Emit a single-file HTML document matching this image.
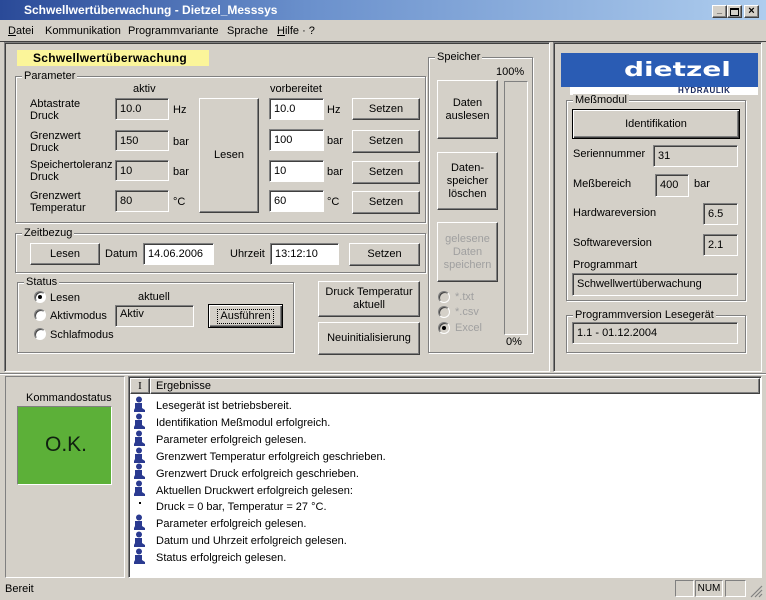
<!DOCTYPE html>
<html><head><meta charset="utf-8"><style>
*{margin:0;padding:0;box-sizing:border-box}
body{width:766px;height:600px;background:#d4d0c8;font:11px "Liberation Sans",sans-serif;color:#000;position:relative;overflow:hidden}
.a{position:absolute;white-space:nowrap}
.btn{position:absolute;background:#d4d0c8;border:1px solid;border-color:#fff #404040 #404040 #fff;box-shadow:inset -1px -1px 0 #808080;display:flex;align-items:center;justify-content:center;text-align:center;line-height:13px}
.fld{position:absolute;background:#d4d0c8;border:1px solid;border-color:#808080 #fff #fff #808080;box-shadow:inset 1px 1px 0 #404040;padding:4px 0 0 4px}
.wf{background:#fff}
.grp{position:absolute;border:1px solid #808080;box-shadow:1px 1px 0 #fff,inset 1px 1px 0 #fff}
.gl{position:absolute;background:#d4d0c8;padding:0 2px;top:-7px;left:6px}
.sunk{position:absolute;border:1px solid;border-color:#808080 #fff #fff #808080}
.rad{position:absolute;width:12px;height:12px;border-radius:50%;background:#fff;border:1px solid;border-color:#808080 #fff #fff #808080;box-shadow:inset 1px 1px 0 #404040}
.rad.on::after{content:"";position:absolute;left:3px;top:3px;width:4px;height:4px;border-radius:50%;background:#000}
.dis{color:#a0a0a0}
</style></head><body>
<div class="a" style="left:0;top:0;width:766px;height:20px;background:linear-gradient(90deg,#2a4a98,#6a90cc 40%,#aecdee)"></div>
<div class="a" style="left:24px;top:3px;color:#fff;font-weight:bold;font-size:12px">Schwellwertüberwachung - Dietzel_Messsys</div>
<div class="btn" style="left:712px;top:5px;width:15px;height:13px;font-size:9px;font-weight:bold;align-items:flex-end">_</div>
<div class="btn" style="left:727px;top:5px;width:15px;height:13px"><div style="width:9px;height:8px;border:1px solid #000;border-top-width:2px"></div></div>
<div class="btn" style="left:744px;top:5px;width:15px;height:13px;font-weight:bold;font-size:11px">×</div>
<div class="a" style="left:8px;top:25px"><u>D</u>atei</div>
<div class="a" style="left:45px;top:25px">Kommunikation</div>
<div class="a" style="left:128px;top:25px">Programmvariante</div>
<div class="a" style="left:227px;top:25px">Sprache</div>
<div class="a" style="left:277px;top:25px"><u>H</u>ilfe · ?</div>
<div class="a" style="left:0;top:41px;width:766px;height:1px;background:#404040"></div>
<div class="a" style="left:4px;top:42px;width:546px;height:330px;border:1px solid;border-color:#808080 #fff #fff #808080;box-shadow:inset 1px 1px 0 #404040"></div>
<div class="a" style="left:553px;top:42px;width:209px;height:330px;border:1px solid;border-color:#808080 #fff #fff #808080;box-shadow:inset 1px 1px 0 #404040"></div>
<div class="a" style="left:17px;top:50px;width:192px;height:16px;background:#fbf59a"></div>
<div class="a" style="left:33px;top:51px;font-weight:bold;font-size:12px;letter-spacing:.3px">Schwellwertüberwachung</div>
<div class="grp" style="left:15px;top:76px;width:411px;height:147px"><span class="gl">Parameter</span></div>
<div class="a" style="left:133px;top:83px">aktiv</div>
<div class="a" style="left:270px;top:83px">vorbereitet</div>
<div class="a" style="left:30px;top:98px;line-height:12px">Abtastrate<br>Druck</div>
<div class="a" style="left:30px;top:130px;line-height:12px">Grenzwert<br>Druck</div>
<div class="a" style="left:30px;top:159px;line-height:12px">Speichertoleranz<br>Druck</div>
<div class="a" style="left:30px;top:190px;line-height:12px">Grenzwert<br>Temperatur</div>
<div class="fld" style="left:115px;top:98px;width:54px;height:22px">10.0</div>
<div class="fld" style="left:115px;top:130px;width:54px;height:21px">150</div>
<div class="fld" style="left:115px;top:160px;width:54px;height:21px">10</div>
<div class="fld" style="left:115px;top:190px;width:54px;height:22px">80</div>
<div class="a" style="left:173px;top:104px">Hz</div>
<div class="a" style="left:173px;top:136px">bar</div>
<div class="a" style="left:173px;top:166px">bar</div>
<div class="a" style="left:173px;top:196px">°C</div>
<div class="btn" style="left:199px;top:98px;width:60px;height:115px">Lesen</div>
<div class="fld wf" style="left:269px;top:98px;width:55px;height:22px">10.0</div>
<div class="fld wf" style="left:269px;top:129px;width:55px;height:22px">100</div>
<div class="fld wf" style="left:269px;top:160px;width:55px;height:22px">10</div>
<div class="fld wf" style="left:269px;top:190px;width:55px;height:22px">60</div>
<div class="a" style="left:327px;top:104px">Hz</div>
<div class="a" style="left:327px;top:135px">bar</div>
<div class="a" style="left:327px;top:166px">bar</div>
<div class="a" style="left:327px;top:196px">°C</div>
<div class="btn" style="left:352px;top:98px;width:68px;height:22px">Setzen</div>
<div class="btn" style="left:352px;top:130px;width:68px;height:23px">Setzen</div>
<div class="btn" style="left:352px;top:161px;width:68px;height:23px">Setzen</div>
<div class="btn" style="left:352px;top:191px;width:68px;height:23px">Setzen</div>
<div class="grp" style="left:15px;top:233px;width:411px;height:40px"><span class="gl">Zeitbezug</span></div>
<div class="btn" style="left:30px;top:243px;width:70px;height:22px">Lesen</div>
<div class="a" style="left:105px;top:248px">Datum</div>
<div class="fld wf" style="left:143px;top:243px;width:71px;height:22px">14.06.2006</div>
<div class="a" style="left:230px;top:248px">Uhrzeit</div>
<div class="fld wf" style="left:270px;top:243px;width:69px;height:22px">13:12:10</div>
<div class="btn" style="left:349px;top:243px;width:71px;height:23px">Setzen</div>
<div class="grp" style="left:17px;top:282px;width:277px;height:71px"><span class="gl">Status</span></div>
<div class="rad on" style="left:34px;top:291px"></div><div class="a" style="left:50px;top:292px">Lesen</div>
<div class="rad" style="left:34px;top:309px"></div><div class="a" style="left:50px;top:310px">Aktivmodus</div>
<div class="rad" style="left:34px;top:328px"></div><div class="a" style="left:50px;top:329px">Schlafmodus</div>
<div class="a" style="left:138px;top:291px">aktuell</div>
<div class="fld" style="left:115px;top:305px;width:79px;height:22px;padding-top:2px">Aktiv</div>
<div class="btn" style="left:208px;top:304px;width:75px;height:24px;border:1px solid #000;box-shadow:inset 1px 1px 0 #fff,inset -1px -1px 0 #404040,inset -2px -2px 0 #808080"><span style="outline:1px dotted #000;padding:0 2px">Ausführen</span></div>
<div class="btn" style="left:318px;top:281px;width:102px;height:36px">Druck Temperatur<br>aktuell</div>
<div class="btn" style="left:318px;top:322px;width:102px;height:33px">Neuinitialisierung</div>
<div class="grp" style="left:428px;top:57px;width:105px;height:296px"><span class="gl">Speicher</span></div>
<div class="a" style="left:496px;top:66px">100%</div>
<div class="btn" style="left:437px;top:80px;width:61px;height:59px">Daten<br>auslesen</div>
<div class="btn" style="left:437px;top:152px;width:61px;height:58px">Daten-<br>speicher<br>löschen</div>
<div class="btn dis" style="left:437px;top:222px;width:61px;height:60px">gelesene<br>Daten<br>speichern</div>
<div class="a" style="left:504px;top:81px;width:24px;height:254px;border:1px solid;border-color:#808080 #fff #fff #808080"></div>
<div class="a" style="left:506px;top:336px">0%</div>
<div class="rad" style="left:438px;top:291px;background:#d4d0c8"></div><div class="a dis" style="left:455px;top:291px">*.txt</div>
<div class="rad" style="left:438px;top:306px;background:#d4d0c8"></div><div class="a dis" style="left:455px;top:306px">*.csv</div>
<div class="rad on" style="left:438px;top:322px;background:#d4d0c8"></div><div class="a dis" style="left:455px;top:322px">Excel</div>
<div class="a" style="left:561px;top:53px;width:197px;height:34px;background:#2a5cb4"></div>
<div class="a" style="left:570px;top:87px;width:188px;height:8px;background:#fff"></div>
<div class="a" style="left:624px;top:53px;color:#fff;font-weight:900;font-size:28px;transform:scaleX(1.0) scaleY(.7);transform-origin:left center;font-family:'DejaVu Sans',sans-serif">dietzel</div>
<div class="a" style="left:678px;top:86px;font-size:8px;font-weight:bold;color:#1a2a60;letter-spacing:.6px;line-height:9px">HYDRAULIK</div>
<div class="grp" style="left:566px;top:100px;width:180px;height:201px"><span class="gl">Meßmodul</span></div>
<div class="btn" style="left:572px;top:109px;width:168px;height:30px;border:1px solid #000;box-shadow:inset 1px 1px 0 #fff,inset -1px -1px 0 #404040,inset -2px -2px 0 #808080">Identifikation</div>
<div class="a" style="left:573px;top:148px">Seriennummer</div>
<div class="fld" style="left:653px;top:145px;width:85px;height:22px">31</div>
<div class="a" style="left:573px;top:178px">Meßbereich</div>
<div class="fld" style="left:655px;top:174px;width:34px;height:23px">400</div>
<div class="a" style="left:694px;top:178px">bar</div>
<div class="a" style="left:573px;top:207px">Hardwareversion</div>
<div class="fld" style="left:703px;top:203px;width:35px;height:22px">6.5</div>
<div class="a" style="left:573px;top:237px">Softwareversion</div>
<div class="fld" style="left:703px;top:234px;width:35px;height:22px">2.1</div>
<div class="a" style="left:573px;top:259px">Programmart</div>
<div class="fld" style="left:572px;top:273px;width:166px;height:23px">Schwellwertüberwachung</div>
<div class="grp" style="left:566px;top:315px;width:180px;height:38px"><span class="gl">Programmversion Lesegerät</span></div>
<div class="fld" style="left:572px;top:322px;width:166px;height:22px">1.1 - 01.12.2004</div>
<div class="a" style="left:0;top:373px;width:766px;height:2px;border-top:1px solid #808080;border-bottom:1px solid #fff"></div>
<div class="a" style="left:5px;top:376px;width:120px;height:202px;border:1px solid;border-color:#808080 #fff #fff #808080"></div>
<div class="a" style="left:26px;top:392px">Kommandostatus</div>
<div class="a" style="left:17px;top:406px;width:95px;height:79px;background:#5cb038;border:1px solid;border-color:#808080 #fff #fff #808080"></div>
<div class="a" style="left:45px;top:433px;font-size:21px;color:#102010">O.K.</div>
<div class="a" style="left:128px;top:376px;width:634px;height:202px;background:#fff;border:1px solid;border-color:#808080 #fff #fff #808080;box-shadow:inset 1px 1px 0 #404040"></div>
<div class="a" style="left:130px;top:378px;width:630px;height:16px;background:#d4d0c8"></div>
<div class="btn" style="left:130px;top:378px;width:20px;height:16px;font-family:'Liberation Serif',serif">I</div>
<div class="btn" style="left:150px;top:378px;width:610px;height:16px;justify-content:flex-start;padding-left:5px">Ergebnisse</div>
<svg class="a" style="left:132px;top:396px" width="16" height="175">
<defs><g id="p"><circle cx="7" cy="3.5" r="3" fill="#2a3a90"/><path d="M3 7h7v5l3 2v2H2v-2l1-2z" fill="#2a3a90"/></g></defs>
<use href="#p" y="0"/><use href="#p" y="17"/><use href="#p" y="34"/><use href="#p" y="51"/><use href="#p" y="67"/><use href="#p" y="84"/>
<rect x="7" y="106" width="2" height="2" fill="#000"/>
<use href="#p" y="118"/><use href="#p" y="135"/><use href="#p" y="152"/>
</svg>
<div class="a" style="left:156px;top:398px;line-height:16.9px">Lesegerät ist betriebsbereit.<br>Identifikation Meßmodul erfolgreich.<br>Parameter erfolgreich gelesen.<br>Grenzwert Temperatur erfolgreich geschrieben.<br>Grenzwert Druck erfolgreich geschrieben.<br>Aktuellen Druckwert erfolgreich gelesen:<br>Druck = 0 bar, Temperatur = 27 °C.<br>Parameter erfolgreich gelesen.<br>Datum und Uhrzeit erfolgreich gelesen.<br>Status erfolgreich gelesen.</div>
<div class="a" style="left:5px;top:583px">Bereit</div>
<div class="sunk" style="left:675px;top:580px;width:19px;height:17px"></div>
<div class="sunk" style="left:695px;top:580px;width:28px;height:17px;font-size:10px;text-align:center;padding-top:2px">NUM</div>
<div class="sunk" style="left:725px;top:580px;width:21px;height:17px"></div>
<svg class="a" style="left:750px;top:585px" width="14" height="13"><path d="M12 1L1 12M12 5L5 12M12 9L9 12" stroke="#808080" stroke-width="1.2"/></svg>
</body></html>
